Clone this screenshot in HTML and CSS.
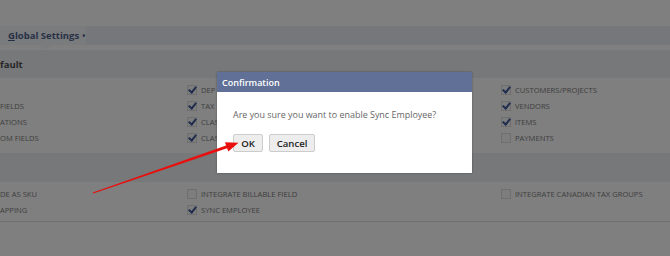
FILE: index.html
```html
<!DOCTYPE html>
<html>
<head>
<meta charset="utf-8">
<link rel="stylesheet" href="styles.css">
</head>
<body>
<div class="page">
  <div class="tabbar">
    <div class="tab"><span class="tab-label"><u>G</u>lobal Settings</span><span class="tab-dot">•</span></div>
  </div>
  <div class="tab-gap"></div>
  <section class="section">
    <div class="section-head">fault</div>
    <div class="grid">
      <div class="cell"></div>
      <div class="cell"><span class="cb on"></span><span class="lbl">DEP</span></div>
      <div class="cell"><span class="cb on"></span><span class="lbl">CUSTOMERS/PROJECTS</span></div>

      <div class="cell"><span class="lbl">FIELDS</span></div>
      <div class="cell"><span class="cb on"></span><span class="lbl">TAX</span></div>
      <div class="cell"><span class="cb on"></span><span class="lbl">VENDORS</span></div>

      <div class="cell"><span class="lbl">ATIONS</span></div>
      <div class="cell"><span class="cb on"></span><span class="lbl">CLAS</span></div>
      <div class="cell"><span class="cb on"></span><span class="lbl">ITEMS</span></div>

      <div class="cell"><span class="lbl">OM FIELDS</span></div>
      <div class="cell"><span class="cb on"></span><span class="lbl">CLAS</span></div>
      <div class="cell"><span class="cb"></span><span class="lbl">PAYMENTS</span></div>
    </div>
  </section>
  <section class="section second">
    <div class="section-head"></div>
    <div class="grid">
      <div class="cell"><span class="lbl">DE AS SKU</span></div>
      <div class="cell"><span class="cb"></span><span class="lbl">INTEGRATE BILLABLE FIELD</span></div>
      <div class="cell"><span class="cb"></span><span class="lbl">INTEGRATE CANADIAN TAX GROUPS</span></div>

      <div class="cell"><span class="lbl">APPING</span></div>
      <div class="cell"><span class="cb on"></span><span class="lbl">SYNC EMPLOYEE</span></div>
      <div class="cell"></div>
    </div>
  </section>
  <div class="rule"></div>
</div>

<div class="dialog">
  <div class="dialog-head">Confirmation</div>
  <div class="dialog-body">
    <p class="dialog-text">Are you sure you want to enable Sync Employee?</p>
    <div class="dialog-actions">
      <button class="btn btn-ok">OK</button>
      <button class="btn btn-cancel">Cancel</button>
    </div>
  </div>
</div>

<svg class="arrow" width="670" height="256" viewBox="0 0 670 256">
  <polygon points="92.8,192.5 226.1,145.5 225,142.2 238.5,142.8 228.3,151.6 227.1,148.3 93.2,193.5" fill="#e8100f"/>
</svg>
</body>
</html>
```

FILE: styles.css
```css
html, body {
  margin: 0;
  padding: 0;
}
body {
  width: 670px;
  height: 256px;
  overflow: hidden;
  background: #7f7f7f;
  font-family: "Open Sans", "DejaVu Sans", sans-serif;
  position: relative;
}
.page {
  padding-top: 26px;
}
.tabbar {
  height: 19px;
  background: #76777a;
  display: flex;
}
.tab {
  width: 86px;
  background: #7a7b7d;
  display: flex;
  align-items: center;
  padding-left: 8px;
  box-sizing: border-box;
  font-size: 9.5px;
  font-weight: 700;
  color: #283046;
  position: relative;
  gap: 3px;
}
.tab u {
  text-decoration-thickness: 1px;
  text-underline-offset: 1px;
}
.tab-dot {
  font-size: 8px;
}
.tab::after {
  content: "";
  position: absolute;
  left: 39px;
  top: 19px;
  border-left: 6px solid transparent;
  border-right: 6px solid transparent;
  border-top: 4px solid #7a7b7d;
}
.tab-gap {
  height: 5px;
}
.section-head {
  height: 28px;
  background: #77787a;
  display: flex;
  align-items: center;
  font-size: 9.5px;
  font-weight: 700;
  color: #262626;
  padding-left: 0;
}
.second {
  margin-top: 7px;
}
.second .section-head {
  height: 29px;
}
.grid {
  display: grid;
  grid-template-columns: 187px 314px 1fr;
  grid-auto-rows: 16px;
  padding-top: 4px;
}
.cell {
  display: flex;
  align-items: center;
  gap: 4px;
}
.lbl {
  font-size: 7.6px;
  color: #3e3e3e;
  white-space: nowrap;
}
.cb {
  width: 10px;
  height: 10px;
  border: 1px solid #6f6f6f;
  background: #7d7d7d;
  box-sizing: border-box;
  position: relative;
  flex: none;
}
.cb.on::after {
  content: "";
  position: absolute;
  left: 2px;
  top: -1px;
  width: 3px;
  height: 6px;
  border-right: 2px solid #1e2c4e;
  border-bottom: 2px solid #1e2c4e;
  transform: rotate(40deg);
}
.rule {
  margin-top: 3px;
  height: 1px;
  background: #6f6f6f;
}
.dialog {
  position: absolute;
  left: 217px;
  top: 72px;
  width: 255px;
  height: 101px;
  background: #ffffff;
  box-shadow: 0 0 2px rgba(0,0,0,0.35);
  display: flex;
  flex-direction: column;
}
.dialog-head {
  height: 20px;
  background: #607096;
  color: #ffffff;
  font-size: 9px;
  font-weight: 600;
  display: flex;
  align-items: center;
  padding-left: 5px;
}
.dialog-body {
  padding: 0 0 0 16px;
}
.dialog-text {
  margin: 16px 0 0 0;
  font-size: 8.95px;
  color: #666666;
  line-height: 13px;
}
.dialog-actions {
  display: flex;
  gap: 6px;
  margin-top: 13px;
}
.btn {
  height: 18px;
  border: 1px solid #cccccc;
  border-radius: 2px;
  background: #ededed;
  color: #222222;
  font-family: "Open Sans", "DejaVu Sans", sans-serif;
  font-size: 9.6px;
  font-weight: 600;
  padding: 0;
  box-sizing: border-box;
}
.btn-ok {
  width: 30px;
}
.btn-cancel {
  width: 46px;
}
.arrow {
  position: absolute;
  left: 0;
  top: 0;
  pointer-events: none;
}
```
